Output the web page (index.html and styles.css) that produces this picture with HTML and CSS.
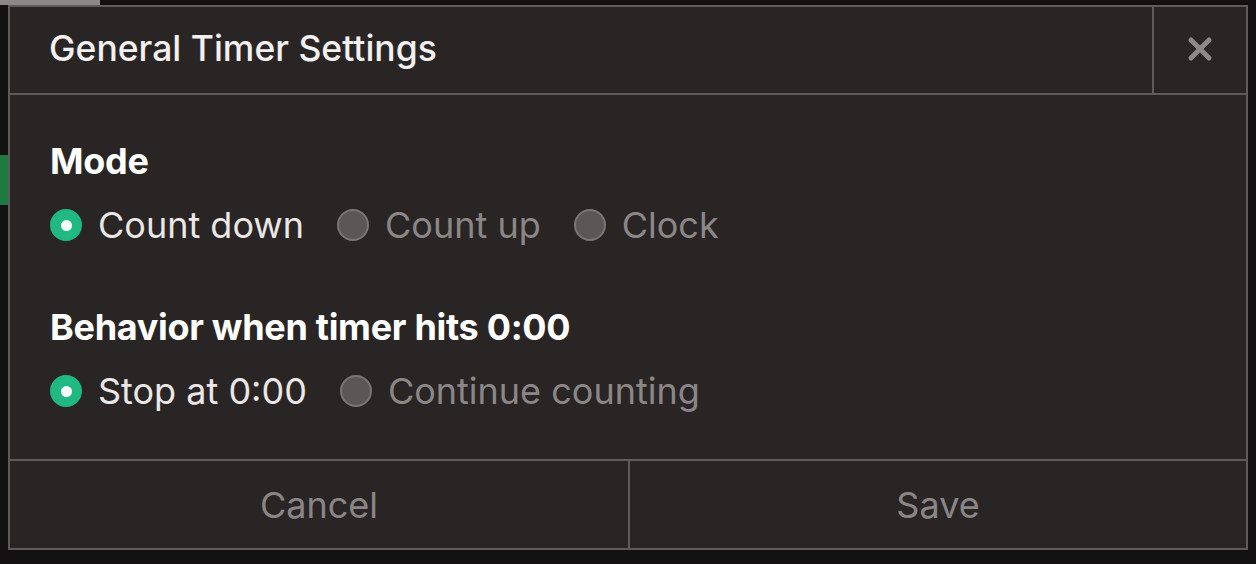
FILE: index.html
```html
<!DOCTYPE html>
<html lang="en">
<head>
  <meta charset="UTF-8">
  <title>General Timer Settings</title>
  <link rel="stylesheet" href="styles.css">
</head>
<body>
  <div class="dialog">
    <div class="dialog-header">
      <h1 class="dialog-title">General Timer Settings</h1>
      <button class="close-btn" aria-label="Close">
        <svg width="28" height="28" viewBox="0 0 28 28">
          <path d="M5 5 L23 23 M23 5 L5 23" stroke="#8e8a8a" stroke-width="5" stroke-linecap="round" fill="none"/>
        </svg>
      </button>
    </div>
    <div class="dialog-body">
      <div class="group">
        <h2 class="group-title">Mode</h2>
        <div class="options">
          <label class="option checked"><span class="radio"></span>Count down</label>
          <label class="option"><span class="radio"></span>Count up</label>
          <label class="option"><span class="radio"></span>Clock</label>
        </div>
      </div>
      <div class="group">
        <h2 class="group-title">Behavior when timer hits 0:00</h2>
        <div class="options">
          <label class="option checked"><span class="radio"></span>Stop at 0:00</label>
          <label class="option"><span class="radio"></span>Continue counting</label>
        </div>
      </div>
    </div>
    <div class="dialog-footer">
      <button class="footer-btn">Cancel</button>
      <button class="footer-btn">Save</button>
    </div>
  </div>
</body>
</html>
```

FILE: styles.css
```css
* {
  box-sizing: border-box;
}
body {
  margin: 0;
  padding: 5px 8px 14px;
  height: 564px;
  background:
    linear-gradient(#1d7a3e, #1d7a3e) 0 155px / 8px 50px no-repeat,
    linear-gradient(#8a8888, #8a8888) 0 0 / 100px 5px no-repeat,
    #131111;
  font-family: Inter, 'Noto Sans', sans-serif;
  overflow: hidden;
}
.dialog {
  height: 545px;
  border: 2px solid #5f5b5b;
  background: #2a2525;
  display: flex;
  flex-direction: column;
}
.dialog-header {
  display: flex;
  height: 88px;
  border-bottom: 2px solid #5f5b5b;
}
.dialog-title {
  flex: 1;
  margin: 0;
  padding: 0 0 3px 39px;
  display: flex;
  align-items: center;
  font-size: 35.5px;
  font-weight: 500;
  color: #f3f0f0;
}
.close-btn {
  width: 94px;
  border: none;
  border-left: 2px solid #5f5b5b;
  background: transparent;
  display: flex;
  align-items: center;
  justify-content: center;
  padding: 0 0 3px;
  cursor: pointer;
}
.dialog-body {
  flex: 1;
  padding: 46px 40px 0;
  display: flex;
  flex-direction: column;
  gap: 60px;
}
.group-title {
  margin: 0 0 22px;
  font-size: 36px;
  font-weight: 700;
  letter-spacing: -0.3px;
  color: #ffffff;
  line-height: 40px;
}
.options {
  display: flex;
  gap: 33px;
}
.option {
  display: flex;
  align-items: center;
  gap: 16px;
  font-size: 36px;
  line-height: 44px;
  color: #8c8787;
}
.radio {
  width: 32px;
  height: 32px;
  border-radius: 50%;
  background: #5b5757;
  border: 2px solid #7b7676;
  display: flex;
  align-items: center;
  justify-content: center;
}
.option.checked {
  color: #ebe7e7;
}
.option.checked .radio {
  background: #1fb981;
  border-color: #1fb981;
}
.option.checked .radio::after {
  content: '';
  width: 11px;
  height: 11px;
  border-radius: 50%;
  background: #fff;
}
.dialog-footer {
  display: grid;
  grid-template-columns: 618px 1fr;
  height: 89px;
  border-top: 2px solid #5f5b5b;
}
.footer-btn {
  border: none;
  background: transparent;
  font-family: Inter, 'Noto Sans', sans-serif;
  font-size: 36px;
  color: #8b8686;
  cursor: pointer;
}
.footer-btn + .footer-btn {
  border-left: 2px solid #5f5b5b;
}
```
